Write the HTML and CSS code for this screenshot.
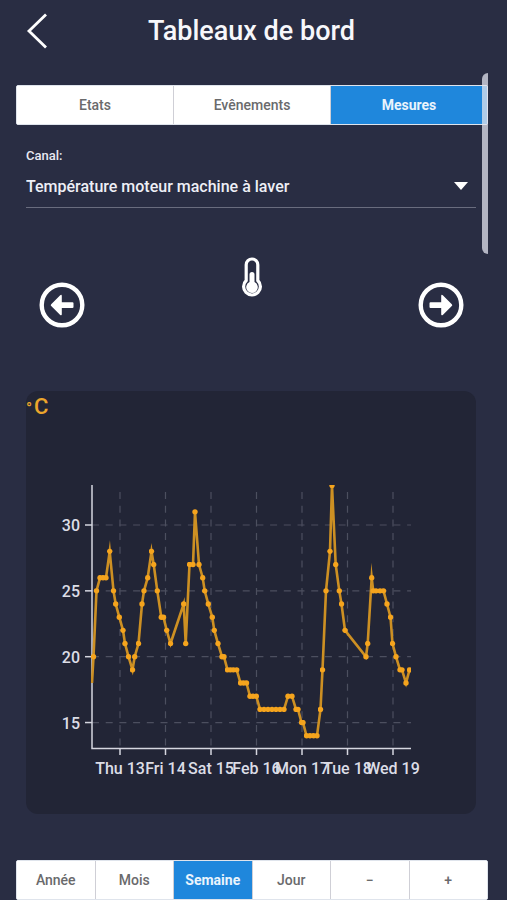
FILE: index.html
```
<!DOCTYPE html>
<html lang="fr">
<head>
    <meta charset="UTF-8">
    <meta name="viewport" content="width=device-width, initial-scale=1.0">
    <title>Tableaux de bord</title>
    <link rel="stylesheet" href="styles.css">
</head>
<body>
    <header class="header">
        <button class="icon-button" type="button" aria-label="Retour">
            <svg width="24" height="36" viewBox="0 0 24 36"><path d="M22 1.5 5 18 22 34.5" fill="none" stroke="#fff" stroke-width="2.8"/></svg>
        </button>
        <h1>Tableaux de bord</h1>
    </header>

    <nav class="segments">
        <button type="button">Etats</button>
        <button type="button">Evênements</button>
        <button type="button" class="active">Mesures</button>
    </nav>

    <main class="content">
        <div class="field">
            <label for="canal">Canal:</label>
            <div class="select-row">
                <select id="canal">
                    <option>Température moteur machine à laver</option>
                </select>
                <svg class="caret" width="14" height="8" viewBox="0 0 14 8"><path d="M0 0h14L7 8z" fill="#fff"/></svg>
            </div>
        </div>

        <div class="period">
            <button class="icon-button" type="button" aria-label="Période précédente">
                <svg width="46" height="46" viewBox="0 0 46 46">
                    <circle cx="23" cy="23" r="20.3" fill="none" stroke="#fff" stroke-width="4.4"/>
                    <path d="M12.2 22.2 21.2 13.2Q22.8 12.2 22.8 14V20.2H33.5Q34.5 20.2 34.5 21.2V25Q34.5 26 33.5 26H22.8V32.2Q22.8 34 21.2 33L12.2 24Q11.2 23.1 12.2 22.2Z" fill="#fff"/>
                </svg>
            </button>
            <svg class="thermometer" width="20" height="41" viewBox="0 0 20 41">
                <path d="M4.2 23.5V7.8a5.8 5.8 0 0 1 11.6 0V23.5A8.4 8.4 0 1 1 4.2 23.5Z" fill="none" stroke="#fff" stroke-width="3.2"/>
                <path d="M7.5 17.5a2.5 2.5 0 0 1 5 0V25A5.8 5.8 0 1 1 7.5 25Z" fill="#fff"/>
            </svg>
            <button class="icon-button" type="button" aria-label="Période suivante">
                <svg width="46" height="46" viewBox="0 0 46 46">
                    <circle cx="23" cy="23" r="20.3" fill="none" stroke="#fff" stroke-width="4.4"/>
                    <path d="M33.8 22.2 24.8 13.2Q23.2 12.2 23.2 14V20.2H12.5Q11.5 20.2 11.5 21.2V25Q11.5 26 12.5 26H23.2V32.2Q23.2 34 24.8 33L33.8 24Q34.8 23.1 33.8 22.2Z" fill="#fff"/>
                </svg>
            </button>
        </div>

        <section class="card">
            <div class="unit"><span class="degree">°</span>C</div>
            <svg class="chart" id="chart" viewBox="0 0 450 393">
                <defs>
                    <clipPath id="plot"><rect x="65" y="64" width="320" height="264"/></clipPath>
                    <marker id="dot" markerUnits="userSpaceOnUse" markerWidth="6" markerHeight="6" refX="3" refY="3">
                        <circle cx="3" cy="3" r="2.7" fill="#f5a41d"/>
                    </marker>
                </defs>
                <g id="grid"></g>
                <path class="axis" d="M66 64V327.5H385"/>
                <g clip-path="url(#plot)">
                    <polyline id="line" class="line"/>
                    <polyline id="dots" class="dots"/>
                </g>
            </svg>
        </section>
    </main>

    <nav class="segments">
        <button type="button">Année</button>
        <button type="button">Mois</button>
        <button type="button" class="active">Semaine</button>
        <button type="button">Jour</button>
        <button type="button" aria-label="Dézoomer">−</button>
        <button type="button" aria-label="Zoomer">+</button>
    </nav>

    <div class="scroll-indicator"></div>

    <script src="chart.js"></script>
</body>
</html>
```
FILE: styles.css
```
* {
    box-sizing: border-box;
}
body {
    margin: 0;
    background-color: #292d43;
    color: #e8e9f2;
    font-family: Roboto, "Liberation Sans", sans-serif;
    font-weight: 500;
    position: relative;
}
button {
    font: inherit;
    color: inherit;
    padding: 0;
    border: 0;
    cursor: pointer;
}
svg {
    display: block;
}
.icon-button {
    background: none;
}
.header {
    display: grid;
    grid-template-columns: 24px 1fr 24px;
    align-items: center;
    height: 62px;
    margin-bottom: 23px;
    padding: 0 28px 0 24px;
}
.header h1 {
    margin: 0;
    color: #f7f7fb;
    font-size: 27px;
    font-weight: 500;
    line-height: 32px;
    text-align: center;
}
.segments {
    display: flex;
    height: 40px;
    margin: 0 19px 0 16px;
    border: 1px solid #dfe4ec;
    border-radius: 2px;
    background: #fff;
}
.segments button {
    flex: 1 1 0;
    background: #fff;
    color: #6a6a6c;
    font-size: 14px;
}
.segments button:not(:last-child) {
    border-right: 1px solid #cfcfd6;
}
.segments .active {
    background: #1f87dc;
    color: #eaf4fc;
    font-weight: 700;
}
.content {
    padding: 22px 31px 46px 26px;
}
.field label {
    display: block;
    font-size: 13px;
    line-height: 18px;
}
.select-row {
    display: flex;
    align-items: center;
    height: 43px;
    padding-right: 8px;
    border-bottom: 1px solid #696c7e;
}
.select-row select {
    flex: 1;
    appearance: none;
    padding: 0;
    border: 0;
    outline: 0;
    background: none;
    color: #eeeff6;
    font: inherit;
    font-size: 16px;
}
.period {
    display: flex;
    justify-content: space-between;
    align-items: flex-end;
    height: 71px;
    margin: 49px 0 63px;
    padding: 0 12px 0 13px;
}
.thermometer {
    align-self: flex-start;
}
.card {
    border-radius: 12px;
    background: #222536;
}
.unit {
    height: 30px;
    color: #eba62c;
    font-size: 22px;
    line-height: 31px;
}
.degree {
    display: inline-block;
    width: 8px;
    font-size: 16px;
}
.chart {
    width: 100%;
    height: auto;
}
.chart text {
    fill: #dcdde6;
    font-size: 16px;
}
.axis {
    fill: none;
    stroke: #d5d6df;
    stroke-width: 1.5;
}
.grid {
    stroke: #4c4f5f;
    stroke-width: 1.2;
    stroke-dasharray: 7 6.7;
}
.line {
    fill: none;
    stroke: #cd9023;
    stroke-width: 2.6;
    stroke-miterlimit: 14;
}
.dots {
    fill: none;
    stroke: none;
    marker-mid: url(#dot);
}
.scroll-indicator {
    position: absolute;
    top: 73px;
    right: 19px;
    width: 6px;
    height: 181px;
    border-radius: 6px 0 0 6px;
    background: rgba(225, 227, 238, 0.75);
}
```
FILE: chart.js
```
// [x, temperature]
const points = [
    [66, 18], [67.5, 20], [70.5, 25], [74, 26], [77, 26], [80, 26], [83.7, 28], [87.5, 25],
    [89.7, 24], [93.3, 23], [97, 22], [99, 21], [102.5, 20], [106.5, 19], [108.7, 20],
    [112.5, 21], [116, 24], [118, 25], [121.7, 26], [125.5, 28], [127.7, 27], [131.3, 25],
    [135.3, 23], [137.5, 23], [140.7, 22], [144.5, 21], [157.7, 24], [159.7, 21], [163.5, 27],
    [167, 27], [169, 31], [173, 27], [176.7, 26], [178.7, 25], [182.3, 24], [186.3, 23],
    [188.3, 22], [192, 21], [196, 20], [198, 20], [201.5, 19], [204.5, 19], [207.5, 19],
    [210.7, 19], [214.5, 18], [217.5, 18], [220.5, 18], [224, 17], [227, 17], [230.3, 17],
    [234, 16], [238, 16], [242, 16], [246, 16], [250, 16], [254, 16], [258, 16], [262, 17],
    [266, 17], [270, 16], [272, 16], [275.5, 15], [277, 15], [280.5, 14], [284, 14], [287.5, 14],
    [291, 14], [294.5, 16], [296.5, 19], [300, 25], [304, 28], [306, 33], [309.7, 27],
    [313.3, 25], [315.5, 24], [319, 22], [340, 20], [341.7, 21], [345.7, 26], [347.2, 25],
    [350, 25], [354, 25], [357.5, 25], [361, 24], [364.5, 23], [366.5, 21], [370, 20],
    [374, 19], [376, 19], [380, 18], [383.5, 19], [387, 19]
];
const days = ["Thu 13", "Fri 14", "Sat 15", "Feb 16", "Mon 17", "Tue 18", "Wed 19"];
const y = v => 104 + (30 - v) * 13.17;

let grid = "";
[30, 25, 20, 15].forEach(v => {
    grid += `<path class="grid" d="M66 ${y(v)}H385"/>
        <path class="axis" d="M59 ${y(v)}H66"/>
        <text x="54" y="${y(v) + 6}" text-anchor="end">${v}</text>`;
});
days.forEach((day, i) => {
    const x = 94 + i * 45.5;
    grid += `<path class="grid" d="M${x} 71V327"/>
        <path class="axis" d="M${x} 327V334"/>
        <text x="${x}" y="353" text-anchor="middle">${day}</text>`;
});
document.getElementById("grid").innerHTML = grid;

const path = points.map(([x, v]) => x + "," + y(v)).join(" ");
document.getElementById("line").setAttribute("points", path);
document.getElementById("dots").setAttribute("points", path);
```
